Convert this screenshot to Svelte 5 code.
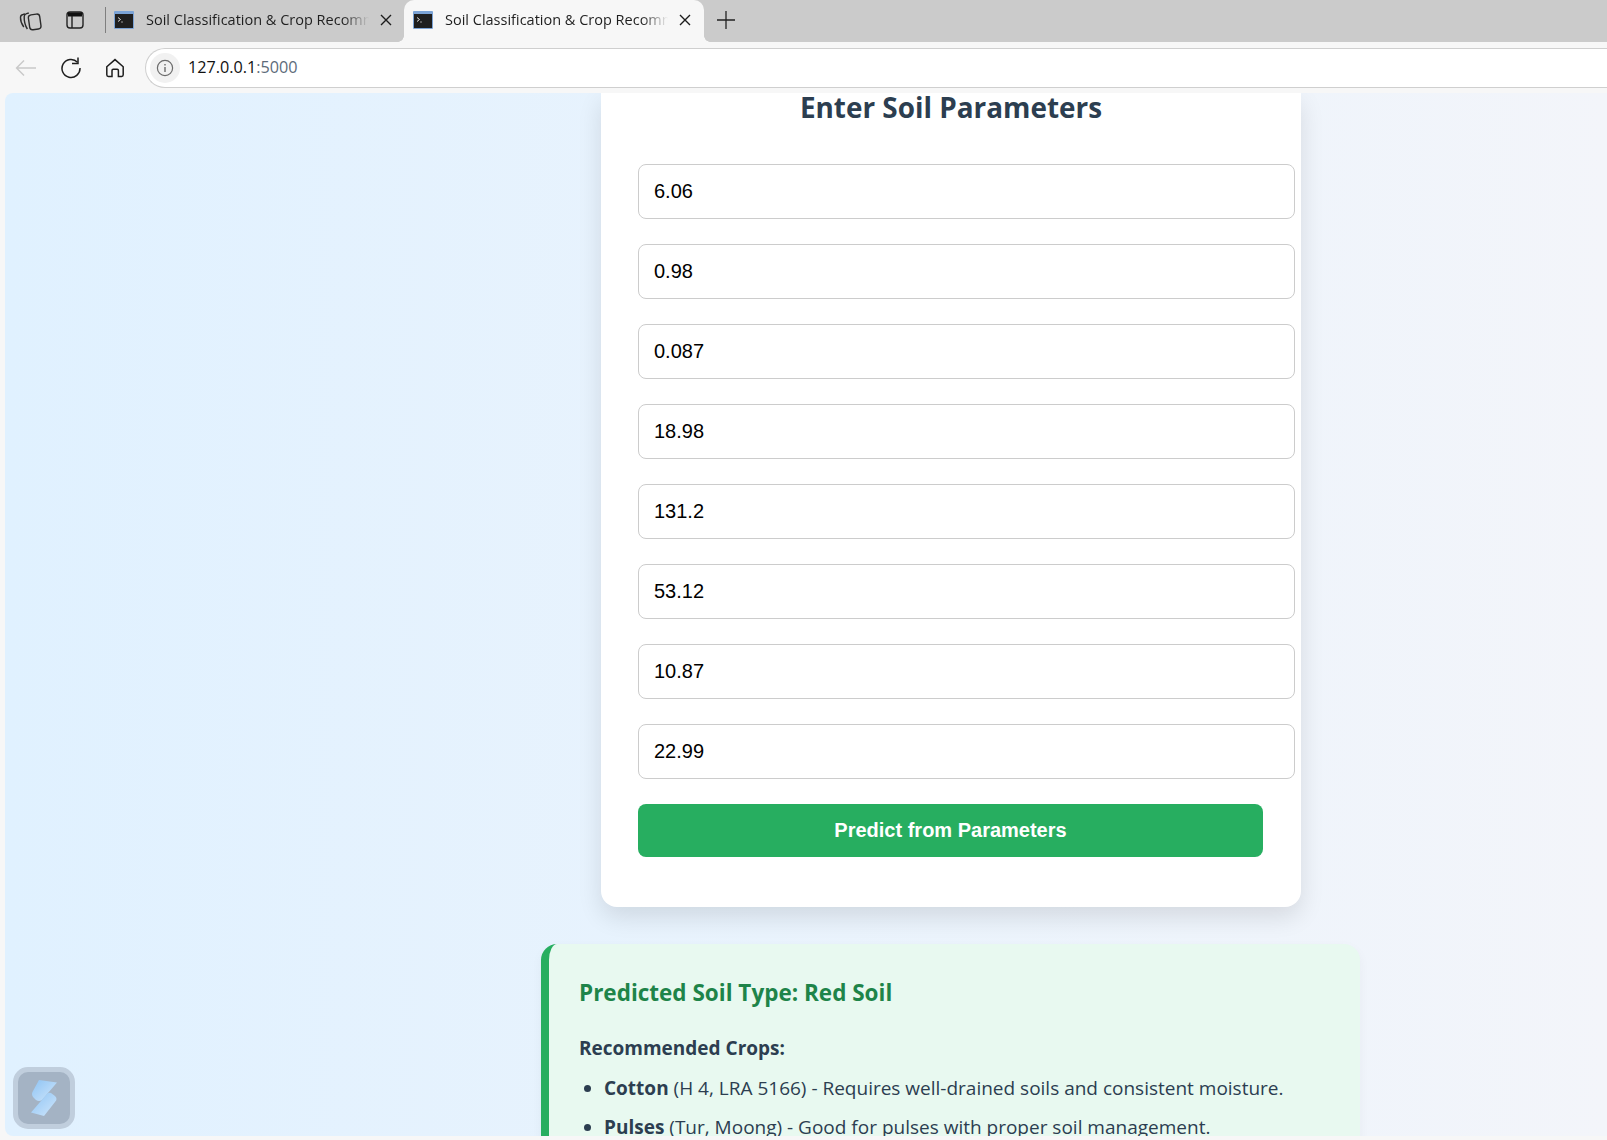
<script lang="ts">
  const params = ["6.06", "0.98", "0.087", "18.98", "131.2", "53.12", "10.87", "22.99"];
  const tabTitle = "Soil Classification & Crop Recommendation";
</script>

{#snippet favicon()}
  <svg class="favicon" viewBox="0 0 20 18" width="20" height="18">
    <rect x="0" y="0" width="20" height="18" rx="1" fill="#7ba3d6" />
    <rect x="1" y="3" width="18" height="14" fill="#1f1f1f" />
    <path d="M4 6.500l2.500 2L4 10.500" fill="none" stroke="#ddd" stroke-width="1" />
    <path d="M7 11h2" stroke="#999" stroke-width="1" />
  </svg>
{/snippet}

{#snippet closeIcon()}
  <svg class="close" viewBox="0 0 12 12" width="12" height="12">
    <path d="M1 1l10 10M11 1L1 11" stroke="#1c1c1c" stroke-width="1.4" fill="none" />
  </svg>
{/snippet}

<div class="window">
  <header class="tabstrip">
    <div class="strip-icons">
      <svg viewBox="0 0 24 24" width="24" height="24" fill="none" stroke="#2a2a2a" stroke-width="1.4">
        <path d="M5.800 19C3.600 16 2.400 12.500 2.500 9.500c0-1.600 1-2.700 2.500-3l2-.5" />
        <path d="M9.400 21C7.400 18 6 13.500 6.200 8.500 6.300 7 7.200 6 8.600 5.600l2.200-.6" />
        <rect x="11" y="6.500" width="11.400" height="15" rx="3" transform="rotate(-8 16 14)" />
      </svg>
      <svg viewBox="0 0 20 20" width="20" height="20" fill="none">
        <rect x="2" y="2" width="16" height="16" rx="3" stroke="#222" stroke-width="1.4" />
        <path d="M3 2.500h14v4H3z" fill="#111" />
        <path d="M7 6v12" stroke="#222" stroke-width="1.4" />
      </svg>
    </div>
    <span class="divider"></span>
    <div class="tab">
      {@render favicon()}
      <span class="tab-title">{tabTitle}</span>
      {@render closeIcon()}
    </div>
    <div class="tab active">
      {@render favicon()}
      <span class="tab-title">{tabTitle}</span>
      {@render closeIcon()}
    </div>
    <svg class="new-tab" viewBox="0 0 18 18" width="18" height="18">
      <path d="M9 0v18M0 9h18" stroke="#222" stroke-width="1.3" />
    </svg>
  </header>

  <div class="toolbar">
    <div class="nav">
      <svg viewBox="0 0 22 18" width="22" height="18" fill="none" stroke="#c9c9c9" stroke-width="1.4">
        <path d="M21 9H1.500M9 1.500L1.500 9 9 16.500" />
      </svg>
      <svg viewBox="0 0 22 22" width="22" height="22" fill="none" stroke="#1e1e1e" stroke-width="1.5">
        <path d="M17.500 5.200A9 9 0 1 0 20 11" />
        <path d="M18 .5v6h-6" />
      </svg>
      <svg viewBox="0 0 20 20" width="20" height="20" fill="none" stroke="#1e1e1e" stroke-width="1.5">
        <path d="M1.800 8.800L10 1.600l8.200 7.200v8a1.600 1.600 0 0 1-1.600 1.600h-3.200v-6a1.200 1.200 0 0 0-1.200-1.200H8.200A1.200 1.200 0 0 0 7 12.400v6H3.400a1.600 1.600 0 0 1-1.600-1.600z" />
      </svg>
    </div>
    <div class="address">
      <span class="info">
        <svg viewBox="0 0 18 18" width="18" height="18" fill="none" stroke="#6b6b6b" stroke-width="1.2">
          <circle cx="9" cy="9" r="7.600" />
          <path d="M9 8v5M9 5v1.400" stroke-width="1.400" />
        </svg>
      </span>
      <span class="url">127.0.0.1<span class="port">:5000</span></span>
    </div>
  </div>

  <main class="viewport">
    <section class="card">
      <h2>Enter Soil Parameters</h2>
      <form class="fields">
        {#each params as value}
          <input type="text" {value} />
        {/each}
        <button type="button">Predict from Parameters</button>
      </form>
    </section>

    <section class="result">
      <h3>Predicted Soil Type: Red Soil</h3>
      <p>Recommended Crops:</p>
      <ul>
        <li><strong>Cotton</strong> (H 4, LRA 5166) - Requires well-drained soils and consistent moisture.</li>
        <li><strong>Pulses</strong> (Tur, Moong) - Good for pulses with proper soil management.</li>
      </ul>
    </section>

    <div class="widget">
      <svg viewBox="-1 -1 28 38" width="28" height="38">
        <defs>
          <linearGradient id="blade" x1="0" y1="0" x2="1" y2="1">
            <stop offset="0" stop-color="#8fc4f4" />
            <stop offset="1" stop-color="#cfe6fb" />
          </linearGradient>
        </defs>
        <path d="M8 0L26 2.500 11 20Q8 22 5 20L2 17Q0 14 2 11z" fill="url(#blade)" />
        <path d="M13 36L0 32.500 16 14Q18 12 20 13L24 16Q27 19 24 22z" fill="url(#blade)" />
      </svg>
    </div>
  </main>
</div>

<style>
  :global(body) {
    margin: 0;
    background: #f7f7f7;
  }

  .window {
    height: 1140px;
    overflow: hidden;
    font-family: "Open Sans", "Noto Sans", sans-serif;
    background: #f7f7f7;
  }

  .tabstrip {
    height: 42px;
    background: #cbcbcb;
    display: flex;
    align-items: center;
  }

  .strip-icons {
    display: flex;
    align-items: center;
    gap: 23px;
    padding: 0 0 2px 18px;
  }

  .divider {
    width: 1px;
    height: 26px;
    background: #7f7f7f;
    margin: 0 8px 2px 20px;
  }

  .tab {
    width: 290px;
    height: 42px;
    box-sizing: border-box;
    display: flex;
    align-items: center;
    padding: 0 12px 3px 0;
    position: relative;
  }

  .tab.active {
    width: 300px;
    padding-left: 9px;
    padding-right: 13px;
    background: #f7f7f7;
    border-radius: 10px 10px 0 0;
  }

  /* flared feet of the active tab */
  .tab.active::before,
  .tab.active::after {
    content: "";
    position: absolute;
    bottom: 0;
    width: 6px;
    height: 6px;
    background: radial-gradient(circle at 0 0, #cbcbcb 5.500px, #f7f7f7 6px);
  }

  .tab.active::before {
    left: -6px;
  }

  .tab.active::after {
    right: -6px;
    background: radial-gradient(circle at 100% 0, #cbcbcb 5.500px, #f7f7f7 6px);
  }

  .favicon {
    flex: none;
  }

  .tab-title {
    flex: 1;
    min-width: 0;
    margin-left: 12px;
    font-size: 14.500px;
    color: #1f1f1f;
    white-space: nowrap;
    overflow: hidden;
    -webkit-mask-image: linear-gradient(to right, #000 88%, transparent 100%);
    mask-image: linear-gradient(to right, #000 88%, transparent 100%);
  }

  .close {
    flex: none;
    margin-left: 11px;
  }

  .new-tab {
    margin: 0 0 3px 13px;
  }

  .toolbar {
    height: 51px;
    box-sizing: border-box;
    padding: 6px 0 5px 15px;
    display: flex;
    background: #f7f7f7;
  }

  .nav {
    display: flex;
    align-items: center;
    gap: 23px;
    width: 130px;
  }

  .address {
    flex: 1;
    display: flex;
    align-items: center;
    gap: 8px;
    padding-left: 4px;
    background: #fff;
    border: 1px solid #cfcfcf;
    border-right: none;
    border-radius: 20px 0 0 20px;
  }

  .info {
    width: 30px;
    height: 30px;
    border-radius: 50%;
    background: #f1f1f1;
    display: flex;
    align-items: center;
    justify-content: center;
  }

  .url {
    font-size: 16.200px;
    line-height: 20px;
    padding-bottom: 2px;
    color: #111;
  }

  .port {
    color: #5d6b7a;
  }

  .viewport {
    position: relative;
    height: 1043px;
    margin-left: 5px;
    overflow: hidden;
    border-radius: 8px 0 0 8px;
    background: linear-gradient(to right, #e0f1ff, #f3f5fa);
    color: #2c3e50;
  }

  .card {
    box-sizing: border-box;
    width: 700px;
    height: 814px;
    margin: 0 0 37px 596px;
    padding: 0 6px 0 37px;
    background: #fff;
    border-radius: 0 0 16px 16px;
    box-shadow: 0 10px 25px rgba(0, 0, 0, 0.11);
  }

  h2 {
    margin: 0 0 43px -31px;
    text-align: center;
    font-size: 27.900px;
    line-height: 28px;
    font-weight: 700;
    color: #2c3e50;
  }

  .fields {
    display: flex;
    flex-direction: column;
    gap: 25px;
    align-items: flex-start;
  }

  input {
    box-sizing: border-box;
    width: 657px;
    height: 55px;
    padding: 0 15px;
    border: 1px solid #ccc;
    border-radius: 8px;
    font-family: "Liberation Sans", Arial, sans-serif;
    font-size: 20px;
    color: #000;
    background: #fff;
  }

  button {
    width: 625px;
    height: 53px;
    border: none;
    border-radius: 8px;
    background: #27ae60;
    color: #fff;
    font-family: "Liberation Sans", Arial, sans-serif;
    font-size: 20px;
    font-weight: 700;
  }

  .result {
    box-sizing: border-box;
    width: 819px;
    margin-left: 536px;
    padding: 33px 30px 30px 30px;
    background: #e8f9f0;
    border-left: 8px solid #27ae60;
    border-radius: 16px;
    box-shadow: 0 4px 12px rgba(0, 0, 0, 0.04);
  }

  h3 {
    margin: 0 0 25px;
    font-size: 22.500px;
    line-height: 32px;
    font-weight: 700;
    color: #1e8449;
  }

  p {
    margin: 0 0 12px;
    font-size: 19px;
    line-height: 28px;
    font-weight: 700;
  }

  ul {
    margin: 0;
    padding-left: 25px;
  }

  li {
    font-size: 19px;
    line-height: 28px;
    margin-bottom: 11px;
  }

  .widget {
    position: absolute;
    left: 8px;
    bottom: 7px;
    width: 52px;
    height: 52px;
    border: 5px solid #c0cedd;
    border-radius: 15px;
    background: #a4b3c4;
    display: flex;
    align-items: center;
    justify-content: center;
  }
</style>
